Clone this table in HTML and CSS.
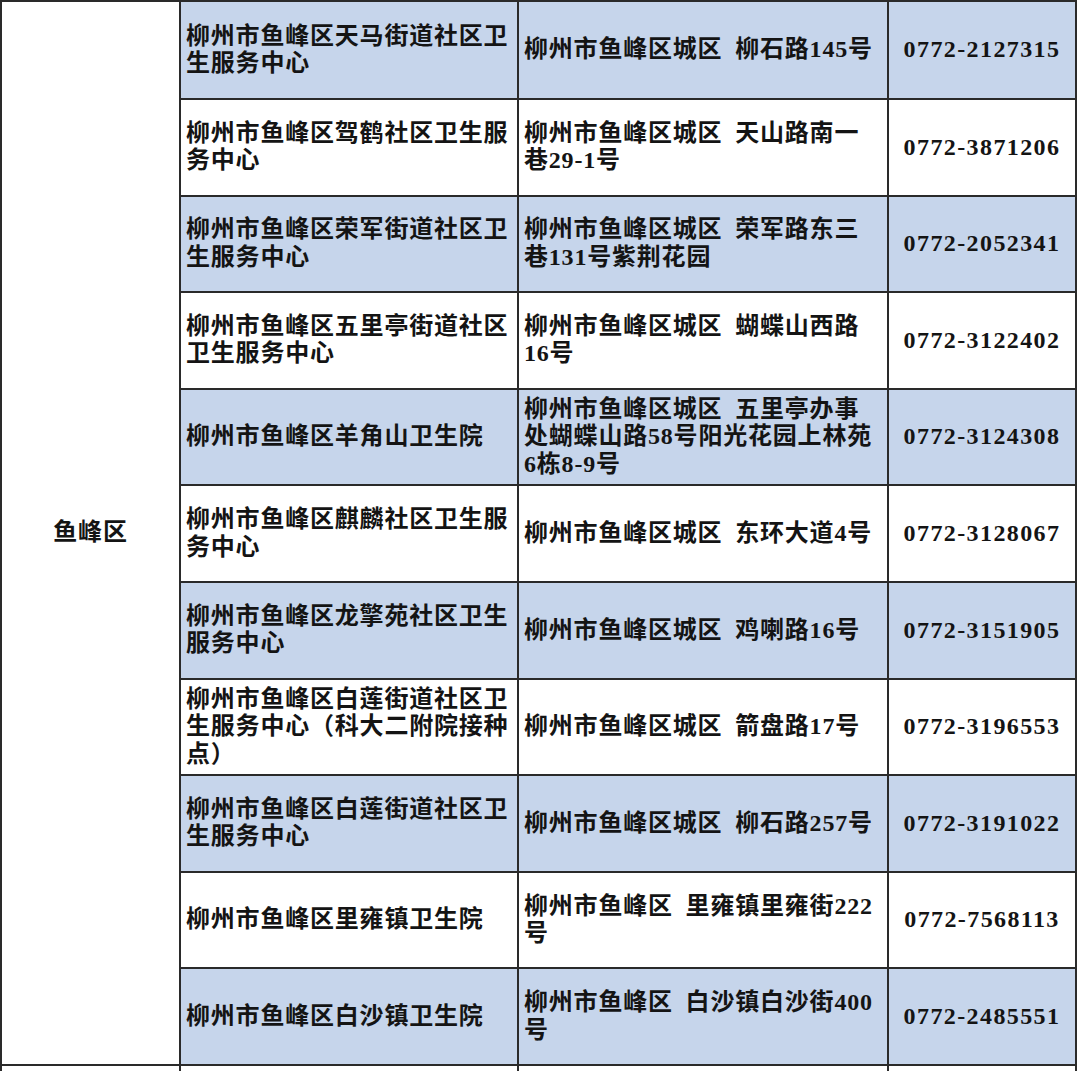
FILE: index.html
```html
<!DOCTYPE html>
<html lang="zh-CN">
<head>
<meta charset="utf-8">
<title>鱼峰区接种点</title>
<link rel="stylesheet" href="styles.css">
</head>
<body>
<table class="clinics">
  <colgroup>
    <col class="c-district">
    <col class="c-name">
    <col class="c-addr">
    <col class="c-phone">
  </colgroup>
  <tbody>
    <tr class="alt first">
      <td class="district" rowspan="11">鱼峰区</td>
      <td class="name">柳州市鱼峰区天马街道社区卫生服务中心</td>
      <td class="addr">柳州市鱼峰区城区&ensp;柳石路145号</td>
      <td class="phone">0772-2127315</td>
    </tr>
    <tr>
      <td class="name">柳州市鱼峰区驾鹤社区卫生服务中心</td>
      <td class="addr">柳州市鱼峰区城区&ensp;天山路南一巷29-1号</td>
      <td class="phone">0772-3871206</td>
    </tr>
    <tr class="alt">
      <td class="name">柳州市鱼峰区荣军街道社区卫生服务中心</td>
      <td class="addr">柳州市鱼峰区城区&ensp;荣军路东三巷131号紫荆花园</td>
      <td class="phone">0772-2052341</td>
    </tr>
    <tr>
      <td class="name">柳州市鱼峰区五里亭街道社区卫生服务中心</td>
      <td class="addr">柳州市鱼峰区城区&ensp;蝴蝶山西路16号</td>
      <td class="phone">0772-3122402</td>
    </tr>
    <tr class="alt">
      <td class="name">柳州市鱼峰区羊角山卫生院</td>
      <td class="addr">柳州市鱼峰区城区&ensp;五里亭办事处蝴蝶山路58号阳光花园上林苑6栋8-9号</td>
      <td class="phone">0772-3124308</td>
    </tr>
    <tr>
      <td class="name">柳州市鱼峰区麒麟社区卫生服务中心</td>
      <td class="addr">柳州市鱼峰区城区&ensp;东环大道4号</td>
      <td class="phone">0772-3128067</td>
    </tr>
    <tr class="alt">
      <td class="name">柳州市鱼峰区龙擎苑社区卫生服务中心</td>
      <td class="addr">柳州市鱼峰区城区&ensp;鸡喇路16号</td>
      <td class="phone">0772-3151905</td>
    </tr>
    <tr>
      <td class="name">柳州市鱼峰区白莲街道社区卫生服务中心（科大二附院接种点）</td>
      <td class="addr">柳州市鱼峰区城区&ensp;箭盘路17号</td>
      <td class="phone">0772-3196553</td>
    </tr>
    <tr class="alt">
      <td class="name">柳州市鱼峰区白莲街道社区卫生服务中心</td>
      <td class="addr">柳州市鱼峰区城区&ensp;柳石路257号</td>
      <td class="phone">0772-3191022</td>
    </tr>
    <tr>
      <td class="name">柳州市鱼峰区里雍镇卫生院</td>
      <td class="addr">柳州市鱼峰区&ensp;里雍镇里雍街222号</td>
      <td class="phone">0772-7568113</td>
    </tr>
    <tr class="alt">
      <td class="name">柳州市鱼峰区白沙镇卫生院</td>
      <td class="addr">柳州市鱼峰区&ensp;白沙镇白沙街400号</td>
      <td class="phone">0772-2485551</td>
    </tr>
    <tr class="partial">
      <td></td>
      <td></td>
      <td></td>
      <td></td>
    </tr>
  </tbody>
</table>
</body>
</html>
```

FILE: styles.css
```css
html, body {
  margin: 0;
  padding: 0;
  background: #ffffff;
}

.clinics {
  border-collapse: collapse;
  table-layout: fixed;
  width: 1075px;
  font-family: "Liberation Serif", "Noto Sans CJK SC", serif;
  font-size: 24px;
  font-weight: 700;
  letter-spacing: 0.8px;
  line-height: 27.5px;
  color: #141414;
}

.c-district { width: 179px; }
.c-name { width: 338px; }
.c-addr { width: 370px; }
.c-phone { width: 188px; }

.clinics td {
  border: 2px solid #2a2a2a;
  height: 96.6px;
  padding: 0 4px 0 5px;
  vertical-align: middle;
  background: #ffffff;
  box-sizing: border-box;
}

.clinics tr.first td {
  height: 98px;
}

.clinics tr.alt td {
  background: #c6d5eb;
}

.clinics tr.alt td.district,
.clinics td.district {
  background: #ffffff;
  text-align: center;
  padding: 0;
}

.clinics td.phone {
  text-align: center;
  padding: 0;
  letter-spacing: 1.4px;
}

.clinics tr.partial td {
  height: 10px;
  background: #ffffff;
}
```
